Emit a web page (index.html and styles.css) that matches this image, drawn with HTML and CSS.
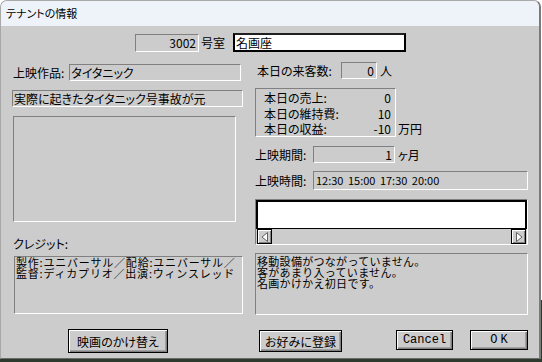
FILE: index.html
```html
<!DOCTYPE html>
<html lang="ja">
<head>
    <meta charset="UTF-8">
    <title>テナントの情報</title>
    <link rel="stylesheet" href="styles.css">
</head>
<body>
    <div class="window">
        <div class="titlebar">テナントの情報</div>
        <div class="content">
            <div class="top-row">
                <div class="field room-no">3002</div>
                <span class="unit-room">号室</span>
                <div class="name-input">名画座</div>
            </div>

            <div class="columns">
                <!-- left side -->
                <div class="left">
                    <div class="row movie-row">
                        <span class="label">上映作品:</span>
                        <div class="field movie-title">タイタニック</div>
                    </div>
                    <div class="field movie-desc">実際に起きたタイタニック号事故が元</div>
                    <div class="poster"></div>
                    <div class="credit-label">クレジット:</div>
                    <div class="credits">製作:ユニバーサル／配給:ユニバーサル／<br>監督:ディカプリオ／出演:ウィンスレッド</div>
                </div>

                <!-- right side -->
                <div class="right">
                    <div class="row visitors-row">
                        <span class="label visitors-label">本日の来客数:</span>
                        <div class="field visitors">0</div>
                        <span class="unit">人</span>
                    </div>
                    <div class="stats-row">
                        <div class="stats">
                            <div class="stat"><span>本日の売上:</span><span>0</span></div>
                            <div class="stat"><span>本日の維持費:</span><span>10</span></div>
                            <div class="stat"><span>本日の収益:</span><span>-10</span></div>
                        </div>
                        <span class="unit yen">万円</span>
                    </div>
                    <div class="row period-row">
                        <span class="label short-label">上映期間:</span>
                        <div class="field period">1</div>
                        <span class="unit">ヶ月</span>
                    </div>
                    <div class="row times-row">
                        <span class="label short-label">上映時間:</span>
                        <div class="field times">12:30 15:00 17:30 20:00</div>
                    </div>
                    <div class="listbox">
                        <div class="list-area"></div>
                        <div class="hscroll">
                            <div class="scroll-btn">
                                <svg width="8" height="10" viewBox="0 0 8 10"><path d="M6.5 0.5 L1 5 L6.5 9.5 Z" fill="#fff" stroke="#606060" stroke-width="1"/></svg>
                            </div>
                            <div class="scroll-btn">
                                <svg width="8" height="10" viewBox="0 0 8 10"><path d="M1.5 0.5 L7 5 L1.5 9.5 Z" fill="#fff" stroke="#606060" stroke-width="1"/></svg>
                            </div>
                        </div>
                    </div>
                    <div class="messages">移動設備がつながっていません。<br>客があまり入っていません。<br>名画かけかえ初日です。</div>
                </div>
            </div>

            <div class="footer">
                <button class="btn btn-change">映画のかけ替え</button>
                <button class="btn btn-fav">お好みに登録</button>
                <button class="btn btn-cancel">Cancel</button>
                <button class="btn btn-ok">OK</button>
            </div>
        </div>
    </div>
</body>
</html>
```

FILE: styles.css
```css
body {
    margin: 0;
    width: 542px;
    height: 362px;
    overflow: hidden;
    background: linear-gradient(#ffffff 0, #ffffff 300px, #2e3a2e 300px);
    font-family: "Noto Sans CJK JP", sans-serif;
    font-feature-settings: "palt";
    font-size: 12px;
    color: #000;
}
.window {
    width: 541px;
    height: 359px;
    box-sizing: border-box;
    border: 1px solid #a8a8a8;
    border-right: 2px solid #7a7a7a;
    border-bottom: 1px solid #6a6a6a;
    border-radius: 7px 7px 0 0;
    background-color: #cccccc;
    overflow: hidden;
}
.titlebar {
    height: 25px;
    line-height: 25px;
    padding-left: 5px;
    background-color: #eef3fa;
    font-size: 11px;
}
.content {
    padding: 0 11px;
}
.top-row {
    display: flex;
    align-items: center;
    padding: 7px 0 0 123px;
    height: 19px;
}
/* sunken static field */
.field {
    box-sizing: border-box;
    height: 17px;
    line-height: 15px;
    padding: 0 3px;
    border: 1px solid;
    border-color: #808080 #ffffff #ffffff #808080;
    white-space: nowrap;
    overflow: hidden;
}
.room-no {
    width: 64px;
    height: 18px;
    text-align: right;
    padding-right: 2px;
}
.unit-room {
    margin: 0 8px 0 2px;
}
.name-input {
    box-sizing: border-box;
    width: 173px;
    height: 19px;
    line-height: 15px;
    background-color: #fff;
    border: 2px solid #000;
    border-top-color: #202020;
    padding-left: 1px;
}
.columns {
    display: flex;
    gap: 12px;
    margin-top: 10px;
}
.left {
    width: 232px;
}
.right {
    width: 273px;
}
.row {
    display: flex;
    align-items: center;
}
.label {
    line-height: 17px;
}
.movie-row {
    margin-top: 2px;
    padding-left: 1px;
}
.movie-title {
    width: 172px;
    margin-left: 5px;
    padding-left: 1px;
}
.movie-desc {
    margin-top: 9px;
    padding-left: 1px;
}
.poster {
    width: 223px;
    height: 106px;
    box-sizing: border-box;
    margin: 9px 0 0 1px;
    border: 1px solid;
    border-color: #808080 #ffffff #ffffff #808080;
}
.credit-label {
    margin: 15px 0 0 1px;
    line-height: 14px;
}
.credits {
    box-sizing: border-box;
    height: 58px;
    margin: 5px 0 0 2px;
    padding: 0 1px;
    font-size: 11px;
    font-feature-settings: normal;
    line-height: 11px;
    letter-spacing: 0.8px;
    border: 1px solid;
    border-color: #808080 #ffffff #ffffff #808080;
    white-space: nowrap;
}
.visitors-row {
    padding-left: 2px;
}
.visitors-label {
    width: 84px;
}
.visitors {
    width: 36px;
    text-align: right;
    padding-right: 2px;
}
.unit {
    margin-left: 3px;
}
.stats-row {
    display: flex;
    align-items: flex-end;
    margin-top: 9px;
}
.stats {
    box-sizing: border-box;
    width: 141px;
    height: 49px;
    padding: 1px 4px 0 8px;
    border: 1px solid;
    border-color: #808080 #ffffff #ffffff #808080;
}
.stat {
    display: flex;
    justify-content: space-between;
    line-height: 15.5px;
}
.yen {
    margin-left: 2px;
    line-height: 17px;
}
.period-row {
    margin-top: 9px;
}
.short-label {
    width: 58px;
}
.period {
    width: 82px;
    text-align: right;
    padding-right: 2px;
}
.times-row {
    margin-top: 8px;
}
.times {
    width: 215px;
    height: 19px;
    line-height: 17px;
    font-size: 11px;
    padding-left: 2px;
    word-spacing: 2px;
}
.listbox {
    box-sizing: border-box;
    height: 46px;
    margin-top: 9px;
    border: 1px solid;
    border-color: #808080 #ffffff #ffffff #808080;
}
.list-area {
    box-sizing: border-box;
    height: 29px;
    background-color: #fff;
    border: 2px solid #000;
    border-bottom-width: 1px;
}
.hscroll {
    display: flex;
    justify-content: space-between;
    height: 15px;
    padding: 0 1px;
    background-color: #cccccc;
}
.scroll-btn {
    box-sizing: border-box;
    width: 15px;
    height: 15px;
    border: 1px solid #000;
    background-color: #cccccc;
    box-shadow: inset 1px 1px #ffffff, inset -1px -1px #808080;
    display: flex;
    align-items: center;
    justify-content: center;
}
.messages {
    box-sizing: border-box;
    height: 62px;
    margin-top: 8px;
    padding: 2px 1px;
    font-size: 11px;
    font-feature-settings: normal;
    line-height: 11px;
    letter-spacing: 0.3px;
    border: 1px solid;
    border-color: #808080 #ffffff #ffffff #808080;
}
.footer {
    display: flex;
    align-items: flex-start;
    margin-top: 14px;
}
.btn {
    box-sizing: border-box;
    height: 21px;
    padding: 0;
    font-family: "Noto Sans CJK JP", sans-serif;
    font-feature-settings: "palt";
    font-size: 12px;
    color: #000;
    background-color: #cccccc;
    border: 1px solid #000;
    box-shadow: inset 1px 1px #ffffff, inset -1px -1px #808080, inset -2px -2px #a0a0a0;
}
.btn-change {
    width: 100px;
    height: 24px;
    margin-left: 56px;
}
.btn-fav {
    width: 83px;
    height: 22px;
    margin-left: 91px;
    margin-top: 1px;
}
.btn-cancel {
    width: 57px;
    height: 20px;
    margin-left: 54px;
    margin-top: 1px;
    font-family: "Liberation Mono", monospace;
}
.btn-ok {
    width: 58px;
    height: 20px;
    margin-left: 17px;
    margin-top: 1px;
    font-family: "Liberation Mono", monospace;
    letter-spacing: 3px;
    text-indent: 3px;
}
```
